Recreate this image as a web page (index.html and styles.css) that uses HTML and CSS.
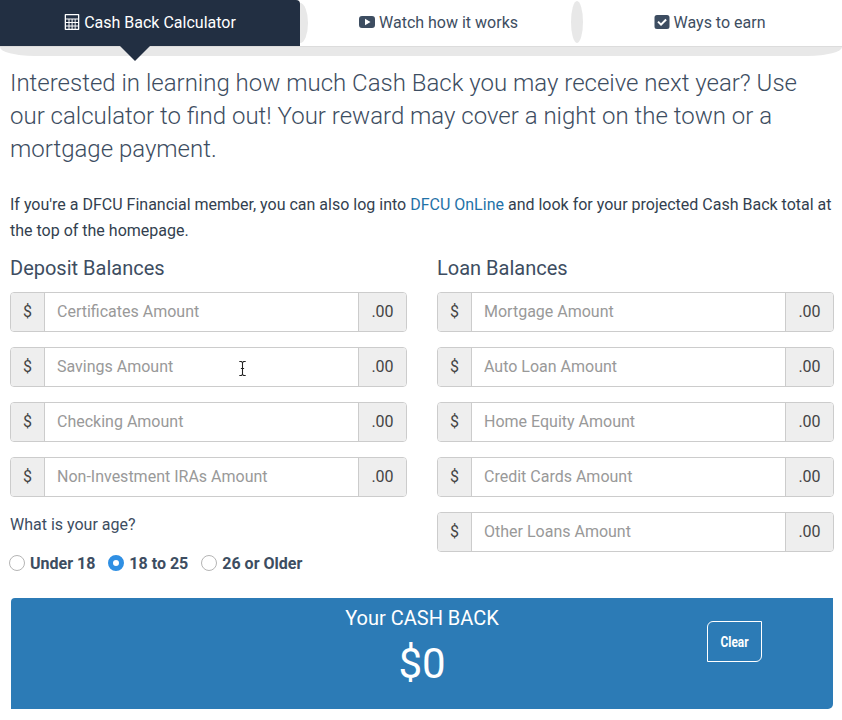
FILE: index.html
```html
<!DOCTYPE html>
<html lang="en">
<head>
<meta charset="utf-8">
<title>Cash Back Calculator</title>
<link rel="stylesheet" href="styles.css">
</head>
<body>
<nav class="tabs">
  <div class="tab-row">
    <a class="tab tab-active">
      <svg class="ico" viewBox="0 0 16 16"><path fill="#fff" fill-rule="evenodd" d="M1.500 0h13a.8.8 0 0 1 .8.8v14.400a.8.8 0 0 1-.8.8h-13a.8.8 0 0 1-.8-.8V.8a.8.8 0 0 1 .8-.8zM2 1.200v3.300h12V1.200zM2 5.600v2.400h2.500V5.600zm3.500 0v2.400h2.100V5.600zm3.100 0v2.400h2.100V5.600zm3 0v2.400H14V5.600zM2 9v2.400h2.500V9zm3.500 0v2.400h2.100V9zm3.100 0v2.400h2.100V9zm3 0v2.400H14V9zM2 12.400v2.400h2.500v-2.400zm3.500 0v2.400h2.100v-2.400zm3.100 0v2.400h2.100v-2.400zm3 0v2.400H14v-2.400z"/></svg>
      Cash Back Calculator
    </a>
    <a class="tab tab-second">
      <svg class="ico" viewBox="0 0 16 16"><path fill="#3d4d61" fill-rule="evenodd" d="M3 2h10a3 3 0 0 1 3 3v6a3 3 0 0 1-3 3H3a3 3 0 0 1-3-3V5a3 3 0 0 1 3-3zm3 2.800v6.400L11.500 8z"/></svg>
      Watch how it works
    </a>
    <a class="tab tab-third">
      <svg class="ico" viewBox="0 0 16 16"><path fill="#3d4d61" fill-rule="evenodd" d="M3 1h10a2.500 2.500 0 0 1 2.500 2.500v9A2.500 2.500 0 0 1 13 15H3a2.500 2.500 0 0 1-2.500-2.500v-9A2.500 2.500 0 0 1 3 1zm4 11 5.800-5.800-1.400-1.400L7 9.200 4.700 6.900 3.300 8.300z"/></svg>
      Ways to earn
    </a>
  </div>
  <div class="tab-band"></div>
  <span class="tab-arrow"></span>
</nav>

<main class="content">
  <p class="lead">Interested in learning how much Cash Back you may receive next year? Use our calculator to find out! Your reward may cover a night on the town or a mortgage payment.</p>
  <p class="note">If you're a DFCU Financial member, you can also log into <a class="link">DFCU OnLine</a> and look for your projected Cash Back total at the top of the homepage.</p>

  <div class="columns">
    <section class="col">
      <h2 class="col-title">Deposit Balances</h2>
      <div class="field"><span class="addon addon-left">$</span><input class="amount" placeholder="Certificates Amount"><span class="addon addon-right">.00</span></div>
      <div class="field field-cursor"><span class="addon addon-left">$</span><input class="amount" placeholder="Savings Amount"><span class="addon addon-right">.00</span>
        <svg class="ibeam" viewBox="0 0 8 14"><path fill="none" stroke="#222" stroke-width="1" d="M1 .5h2l1 1 1-1h2M4 1.500v11M1 13.500h2l1-1 1 1h2M2.500 7h3"/></svg>
      </div>
      <div class="field"><span class="addon addon-left">$</span><input class="amount" placeholder="Checking Amount"><span class="addon addon-right">.00</span></div>
      <div class="field"><span class="addon addon-left">$</span><input class="amount" placeholder="Non-Investment IRAs Amount"><span class="addon addon-right">.00</span></div>
      <p class="age-q">What is your age?</p>
      <div class="radios">
        <label class="radio"><input type="radio" name="age" class="radio-input"><span>Under 18</span></label>
        <label class="radio"><input type="radio" name="age" class="radio-input" checked><span>18 to 25</span></label>
        <label class="radio"><input type="radio" name="age" class="radio-input"><span>26 or Older</span></label>
      </div>
    </section>
    <section class="col">
      <h2 class="col-title">Loan Balances</h2>
      <div class="field"><span class="addon addon-left">$</span><input class="amount" placeholder="Mortgage Amount"><span class="addon addon-right">.00</span></div>
      <div class="field"><span class="addon addon-left">$</span><input class="amount" placeholder="Auto Loan Amount"><span class="addon addon-right">.00</span></div>
      <div class="field"><span class="addon addon-left">$</span><input class="amount" placeholder="Home Equity Amount"><span class="addon addon-right">.00</span></div>
      <div class="field"><span class="addon addon-left">$</span><input class="amount" placeholder="Credit Cards Amount"><span class="addon addon-right">.00</span></div>
      <div class="field"><span class="addon addon-left">$</span><input class="amount" placeholder="Other Loans Amount"><span class="addon addon-right">.00</span></div>
    </section>
  </div>

  <section class="result">
    <div class="result-text">
      <div class="result-label">Your CASH BACK</div>
      <div class="result-value">$0</div>
    </div>
    <button class="clear" type="button"><span class="clear-text">Clear</span></button>
  </section>
</main>
</body>
</html>
```

FILE: styles.css
```css
* { box-sizing: border-box; }
html, body { margin: 0; padding: 0; background: #fff; }
body { font-family: Roboto, "Liberation Sans", sans-serif; color: #3d4d61; overflow: hidden; }

.tabs { position: relative; height: 56px; }
.tab-row { display: flex; height: 47px; border-bottom: 1px solid #dcdcdc; }
.tab { position: relative; display: flex; align-items: center; justify-content: center; gap: 4px; height: 46px; padding-bottom: 2px; font-size: 16px; color: #3d4d61; }
.tab-active { width: 300px; background: #222f42; color: #fff; border-top-right-radius: 4px; z-index: 2; }
.tab-second { width: 277px; }
.tab-third { width: 265px; }
.tab-second::before { content: ""; position: absolute; left: -8px; top: 3px; width: 16px; height: 40px; background: #e8e8e8; border-radius: 50%; }
.tab-third::before { content: ""; position: absolute; left: -6px; top: 1px; width: 12px; height: 42px; background: #e8e8e8; border-radius: 50%; }
.ico { width: 16px; height: 16px; flex: none; }
.tab-band { height: 9px; background: #e8e8e8; border-radius: 0 0 34px 34px / 0 0 9px 9px; }
.tab-arrow { position: absolute; left: 120px; top: 46px; width: 0; height: 0; border-left: 15px solid transparent; border-right: 15px solid transparent; border-top: 15px solid #222f42; z-index: 2; }

.content { padding: 11px 8px 0 10px; }
.lead { margin: 0; font-size: 24px; font-weight: 300; line-height: 33px; }
.note { margin: 26px 0 0; font-size: 16px; line-height: 26px; color: #333f4f; }
.link { color: #1f72a8; }

.columns { display: grid; grid-template-columns: 397px 397px; column-gap: 30px; margin-top: 11px; }
.col-title { margin: 0 0 11px; font-size: 20px; font-weight: 400; line-height: 26px; color: #3d4d61; }
.field { position: relative; display: flex; height: 40px; margin-bottom: 15px; border: 1px solid #ccc; border-radius: 4px; overflow: visible; }
.addon { display: flex; align-items: center; justify-content: center; padding-bottom: 2px; background: #eee; font-size: 16px; color: #444; }
.addon-left { width: 34px; border-right: 1px solid #ccc; border-radius: 3px 0 0 3px; }
.addon-right { flex: none; width: 48px; border-left: 1px solid #ccc; border-radius: 0 3px 3px 0; }
.amount { flex: 1; min-width: 0; height: 100%; border: 0; padding: 0 12px 2px; font: 400 16px Roboto, sans-serif; color: #444; background: #fff; outline: none; }
.amount::placeholder { color: #999; opacity: 1; }
.ibeam { position: absolute; left: 227px; top: 13px; width: 9px; height: 15px; }

.age-q { margin: 0; padding-top: 1px; font-size: 16px; line-height: 24px; color: #3d4d61; }
.radios { display: flex; margin: 14px 0 0 -1px; height: 24px; align-items: center; }
.radio { display: flex; align-items: center; gap: 5px; margin-right: 13px; font-size: 16px; font-weight: 700; }
.radio-input { appearance: none; -webkit-appearance: none; width: 16px; height: 16px; margin: 0; border: 1px solid #b5b5b5; border-radius: 50%; background: #fff; }
.radio-input:checked { border: 5px solid #2f8fe3; }

.result { display: grid; grid-template-columns: 1fr auto 1fr; align-items: start; width: 822px; height: 111px; margin: 23px 0 0 1px; background: #2c7bb6; border-radius: 4px 0 5px 0; color: #fff; }
.result-text { grid-column: 2; text-align: center; padding-top: 6px; }
.result-label { font-size: 20px; line-height: 28px; }
.result-value { font-size: 42px; line-height: 50px; margin-top: 7px; }
.clear { grid-column: 3; justify-self: end; margin: 23px 71px 0 0; width: 55px; height: 41px; padding: 0; background: transparent; border: 1px solid #fff; border-radius: 6px 0 6px 0; color: #fff; font: 700 14px Roboto, sans-serif; }
.clear-text { display: inline-block; transform: scaleX(0.85); }
```
